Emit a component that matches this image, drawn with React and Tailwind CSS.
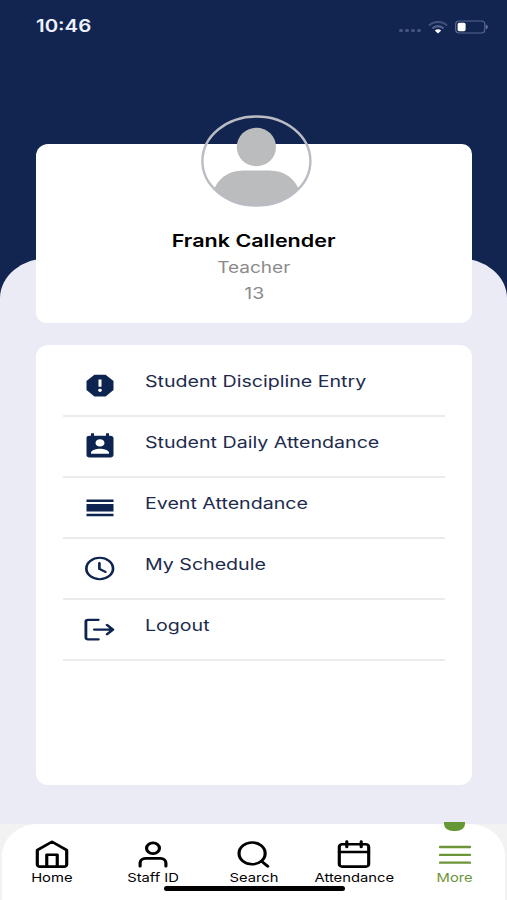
import { MdReport, MdPermContactCalendar } from 'react-icons/md';

const NAVY = '#0e2450';

function EventIcon() {
  return (
    <svg viewBox="0 0 24 24" preserveAspectRatio="none" className="h-[29px] w-9" fill={NAVY}>
      <path d="M3 5.4h18v2H3zM3 9.2h18v6.1H3zM3 17.2h18v2H3z" />
    </svg>
  );
}

function ClockIcon() {
  return (
    <svg viewBox="0 0 24 24" preserveAspectRatio="none" className="h-[29px] w-9" fill="none" stroke={NAVY} strokeWidth="1.8" strokeLinecap="round">
      <circle cx="11.8" cy="12" r="8.9" />
      <path d="M11.6 7.5v4.9l4 2.4" />
    </svg>
  );
}

function LogoutIcon() {
  return (
    <svg viewBox="0 0 24 24" preserveAspectRatio="none" className="h-[29px] w-9" fill="none" stroke={NAVY} strokeWidth="1.9" strokeLinecap="round" strokeLinejoin="round">
      <path d="M10.9 4H4a1.400 1.400 0 0 0-1.400 1.400v13.400A1.400 1.400 0 0 0 4 20.200h6.900M8.200 12.100h12.300M16.700 8.300l3.900 3.800-3.900 3.800" />
    </svg>
  );
}

const MENU = [
  { label: 'Student Discipline Entry', icon: <MdReport preserveAspectRatio="none" className="h-[29px] w-9" color={NAVY} /> },
  { label: 'Student Daily Attendance', icon: <MdPermContactCalendar preserveAspectRatio="none" className="h-[29px] w-9" color={NAVY} /> },
  { label: 'Event Attendance', icon: <EventIcon /> },
  { label: 'My Schedule', icon: <ClockIcon /> },
  { label: 'Logout', icon: <LogoutIcon /> },
];

const TABS = [
  {
    label: 'Home',
    icon: <path d="M2.2 9.7 12 3l9.8 6.7v11.4a1.8 1.8 0 0 1-1.8 1.8H4a1.8 1.8 0 0 1-1.8-1.8zM8.5 22.9V13.4h7v9.5" />,
  },
  {
    label: 'Staff ID',
    icon: (
      <>
        <circle cx="12" cy="8.2" r="4.3" />
        <path d="M3.4 22.6v-2.7A3.6 3.6 0 0 1 7 16.300h10a3.600 3.600 0 0 1 3.600 3.600v2.700" />
      </>
    ),
  },
  {
    label: 'Search',
    icon: (
      <>
        <circle cx="11.4" cy="12.3" r="8.7" />
        <path d="m17.8 18.7 4 3.9" />
      </>
    ),
  },
  {
    label: 'Attendance',
    icon: (
      <>
        <rect x="2.2" y="5" width="19.6" height="17.9" rx="2" />
        <path d="M2.2 11.2h19.6M7.2 2.9v4.2M16.8 2.9v4.2" />
      </>
    ),
  },
  {
    label: 'More',
    active: true,
    icon: <path strokeWidth="1.9" d="M2.2 7.2h19.6M2.2 13.5h19.6M2.2 19.7h19.6" />,
  },
];

function StatusBar() {
  return (
    <div className="flex h-[54px] items-center justify-between pl-9 pr-[18px]">
      <span className="origin-left scale-x-[1.2] text-[17px] font-semibold text-[#eef3ff]">10:46</span>
      <div className="flex items-center">
        <div className="mt-1.5 mr-[7px] flex gap-0.5">
          <i className="h-[3px] w-1 rounded-full bg-[#435580]" />
          <i className="h-[3px] w-1 rounded-full bg-[#435580]" />
          <i className="h-[3px] w-1 rounded-full bg-[#435580]" />
          <i className="h-[3px] w-1 rounded-full bg-[#435580]" />
        </div>
        <svg viewBox="0 0 20 13" className="mr-[7px] h-[13px] w-5" fill="none">
          <path d="M1 4.5C6-.3 14-.3 19 4.5" stroke="#40517d" strokeWidth="2.1" />
          <path d="M4.4 7.4c3.2-3 8-3 11.2 0" stroke="#53648d" strokeWidth="2.1" />
          <path d="M6.8 9.5c1.8-1.6 4.6-1.6 6.4 0L10 12.6z" fill="#fff" />
        </svg>
        <svg viewBox="0 0 34 14" className="h-3.5 w-[34px]" fill="none">
          <rect x=".6" y="1" width="29.2" height="12" rx="3.4" stroke="#566791" strokeWidth="1.2" />
          <rect x="2.6" y="2.8" width="8" height="8.4" rx="1.6" fill="#fff" />
          <path d="M30.9 4.8c2.6.6 2.6 3.8 0 4.4z" fill="#66769c" />
        </svg>
      </div>
    </div>
  );
}

function Avatar() {
  return (
    <svg viewBox="0 0 112 92" className="absolute -top-[29px] left-[164px] h-[92px] w-28">
      <clipPath id="avatar">
        <ellipse cx="56.4" cy="46" rx="54.5" ry="45" />
      </clipPath>
      <g fill="#bbbcbe">
        <ellipse cx="56.4" cy="32" rx="19.6" ry="19.3" />
        <path clipPath="url(#avatar)" d="M12.4 92V78c5-14 15-22.5 31-22.5h26c16 0 26 8.5 31 22.5v14z" />
      </g>
      <ellipse cx="56.4" cy="46" rx="54" ry="44.5" fill="none" stroke="#b9bcc3" strokeWidth="2.4" />
    </svg>
  );
}

export default function App() {
  return (
    <div className="relative flex h-[900px] w-[507px] flex-col overflow-hidden bg-[#122550] font-['Inter',sans-serif]">
      <div className="absolute inset-x-0 top-[258px] bottom-0 rounded-t-[49px_40px] bg-[#ebebf6]" />

      <div className="relative flex flex-1 flex-col">
        <StatusBar />

        {/* Profile card */}
        <div className="relative mx-9 mt-[90px] flex h-[179px] w-[436px] flex-col items-center rounded-[12px_10px] bg-white pt-[84px]">
          <Avatar />
          <h1 className="scale-x-[1.23] text-[17.5px] leading-[26px] font-semibold text-black">Frank Callender</h1>
          <p className="scale-x-[1.19] text-[16px] leading-[26px] text-[#8b8b8b]">Teacher</p>
          <p className="scale-x-[1.22] text-[16px] leading-[26px] text-[#8b8b8b]">13</p>
        </div>

        {/* Menu */}
        <div className="mx-9 mt-[22px] h-[440px] w-[436px] rounded-[12px] bg-white px-[27px] pt-[11px]">
          {MENU.map((item) => (
            <div key={item.label} className="flex h-[61px] items-start border-b-2 border-[#ebebeb]">
              <span className="mt-[15px] ml-[19px]">{item.icon}</span>
              <span className="mt-[13px] ml-[27px] origin-left scale-x-[1.225] text-[16px] leading-6 whitespace-nowrap text-[#1d2b4d]">
                {item.label}
              </span>
            </div>
          ))}
        </div>
      </div>

      {/* Tab bar */}
      <div className="relative h-[76px] bg-[#f2f2f2]">
        <div className="mx-0.5 flex h-full rounded-t-[37px_31px] bg-white">
          {TABS.map((tab) => (
            <div
              key={tab.label}
              className={`relative flex flex-1 flex-col items-center pt-[14px] ${tab.active ? 'text-[#6c9438]' : 'text-black'}`}
            >
              {tab.active && (
                <div className="absolute -top-0.5 h-[9px] w-[21px] rounded-b-[9px_7px] bg-[#659735]" />
              )}
              <svg
                viewBox="0 0 24 24"
                preserveAspectRatio="none"
                className="h-[30px] w-9"
                fill="none"
                stroke="currentColor"
                strokeWidth="2.1"
                strokeLinecap="round"
                strokeLinejoin="round"
              >
                {tab.icon}
              </svg>
              <span className="mt-[3px] scale-x-[1.23] text-[12px] leading-[14px] whitespace-nowrap">{tab.label}</span>
            </div>
          ))}
        </div>
        <div className="absolute bottom-[9px] left-[164px] h-[5px] w-[181px] rounded-full bg-black" />
      </div>
    </div>
  );
}
